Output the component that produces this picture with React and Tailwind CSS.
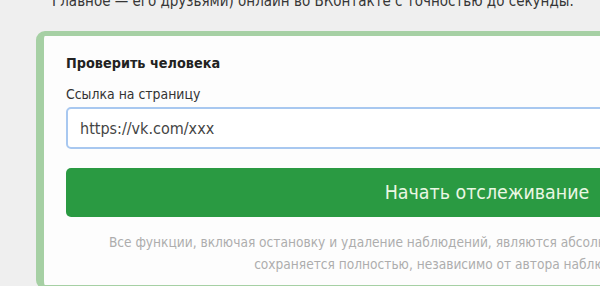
import React from "react";

const font = { fontFamily: '"DejaVu Sans Condensed", "DejaVu Sans", Verdana, sans-serif' };

export default function App() {
  return (
    <div className="w-[600px] h-[286px] overflow-hidden bg-[#efefef]" style={font}>
      {/* Intro text, scrolled so only its last line shows */}
      <p className="-mt-[9px] pl-[52px] text-[15px] leading-[21px] text-[#363636] whitespace-nowrap">
        Главное — его друзьями) онлайн во ВКонтакте с точностью до секунды.
      </p>

      {/* Check card */}
      <div className="ml-[36px] mt-[19px] w-[900px] rounded-[9px] border-[#a6d0a4] border-l-[8px] border-t-[5px] border-b-[4px] border-r-[8px] bg-[#fdfdfd] pl-[22px] pr-[24px] pt-[18px] pb-[10px]">
        <h3 className="text-[14.3px] font-bold leading-[18px] text-[#222]">Проверить человека</h3>
        <label className="block mt-[13px] text-[13.9px] leading-[18px] text-[#333]">Ссылка на страницу</label>
        <input
          readOnly
          value="https://vk.com/xxx"
          className="mt-[4px] block w-[842px] h-[42px] rounded-[5px] border-2 border-[#a8c8f0] bg-white px-[12px] text-[16px] text-[#444] outline-none"
          style={font}
        />
        <button className="mt-[19px] block w-[842px] h-[49px] rounded-[5px] bg-[#2a9a42] text-[19.4px] text-[#eaf7e4]" style={font}>
          Начать отслеживание
        </button>
        <p className="mt-[14px] w-[770px] text-center text-[13.6px] leading-[22px] text-[#adadad]">
          Все функции, включая остановку и удаление наблюдений, являются абсолютно бесплатными, а история
          <br />
          сохраняется полностью, независимо от автора наблюдения.
        </p>
      </div>
    </div>
  );
}
